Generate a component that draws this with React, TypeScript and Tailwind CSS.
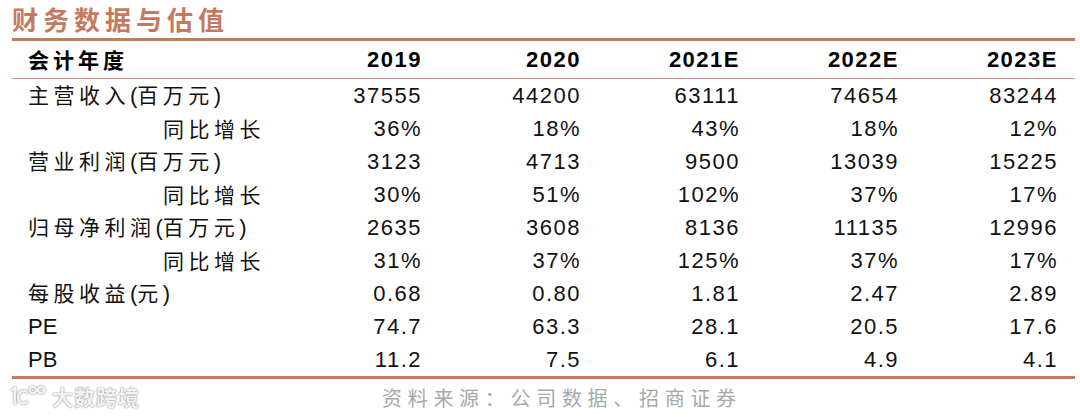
const cjk = "font-['Noto_Sans_CJK_SC',sans-serif]";
const num = "font-['Liberation_Sans',Arial,sans-serif]";

type Row = { label: string; indent?: boolean; latin?: boolean; values: string[] };

const rows: Row[] = [
  { label: "主营收入(百万元)", values: ["37555", "44200", "63111", "74654", "83244"] },
  { label: "同比增长", indent: true, values: ["36%", "18%", "43%", "18%", "12%"] },
  { label: "营业利润(百万元)", values: ["3123", "4713", "9500", "13039", "15225"] },
  { label: "同比增长", indent: true, values: ["30%", "51%", "102%", "37%", "17%"] },
  { label: "归母净利润(百万元)", values: ["2635", "3608", "8136", "11135", "12996"] },
  { label: "同比增长", indent: true, values: ["31%", "37%", "125%", "37%", "17%"] },
  { label: "每股收益(元)", values: ["0.68", "0.80", "1.81", "2.47", "2.89"] },
  { label: "PE", latin: true, values: ["74.7", "63.3", "28.1", "20.5", "17.6"] },
  { label: "PB", latin: true, values: ["11.2", "7.5", "6.1", "4.9", "4.1"] },
];

const years = ["2019", "2020", "2021E", "2022E", "2023E"];

function Label({ row }: { row: Row }) {
  if (row.latin) {
    return <span className={`${num} text-[22px]`}>{row.label}</span>;
  }
  // parentheses are set in the latin face, CJK glyphs get wide spacing
  const parts = row.label.split(/([()])/);
  return (
    <span className={`${cjk} whitespace-nowrap text-[21px] tracking-[4.5px]`}>
      {parts.map((p, i) =>
        p === "(" || p === ")" ? (
          <span key={i} className={`${num} text-[22px] tracking-normal`}>
            {p}
          </span>
        ) : (
          <span key={i}>{p}</span>
        )
      )}
    </span>
  );
}

function Watermark() {
  return (
    <div className="absolute left-[9px] top-[384px] flex items-center gap-[3px] text-[#f2f2f2] [text-shadow:0_0_1px_#8a8a8a,0_0_2px_#b0b0b0]">
      <svg width="40" height="24" viewBox="0 0 40 24" fill="none" stroke="#f2f2f2" strokeWidth="2.2" strokeLinecap="round" className="drop-shadow-[0_0_1px_#888]">
        <path d="M3 6 L6 4 L6 20" />
        <path d="M18 8 C14 5 9 8 9 13 C9 18 14 21 18 18" />
        <circle cx="24" cy="6" r="3.2" />
        <circle cx="32" cy="6" r="3.2" />
      </svg>
      <span className={`${cjk} text-[21px] font-bold leading-none tracking-[1px]`}>大数跨境</span>
    </div>
  );
}

export default function App() {
  return (
    <div className="relative h-[417px] w-[1080px] overflow-hidden bg-white">
      <div className="pl-[12px] pr-[5px]">
        <div className="flex h-[38px] items-center">
          <span className={`${cjk} text-[26px] font-bold leading-none tracking-[5px] text-[#c47a5e]`}>
            财务数据与估值
          </span>
        </div>
        <div className="border-t-[3px] border-[#c47a5e]">
          <div className="grid h-[38px] grid-cols-[250px_repeat(5,159px)] items-center border-b border-[#c98c72] text-black">
            <span className={`${cjk} pl-[16px] text-[21px] font-bold tracking-[4px]`}>会计年度</span>
            {years.map((y) => (
              <span key={y} className={`${num} text-right text-[22px] font-bold tracking-[1.5px] mr-[-1px]`}>
                {y}
              </span>
            ))}
          </div>
          <div className="border-b-[3px] border-[#c47a5e]">
            {rows.map((row, i) => (
              <div
                key={i}
                className="grid h-[33px] grid-cols-[250px_repeat(5,159px)] items-center pb-[5px] text-[#111]"
              >
                <div className={row.indent ? "pl-[151px]" : "pl-[16px]"}>
                  <Label row={row} />
                </div>
                {row.values.map((v, j) => (
                  <span key={j} className={`${num} text-right text-[22px] tracking-[1.5px] mr-[-1px]`}>
                    {v}
                  </span>
                ))}
              </div>
            ))}
          </div>
        </div>
      </div>
      <div className="flex h-[38px] items-center pl-[382px]">
        <span className={`${cjk} text-[20px] tracking-[5.7px] text-[#a8a8a8]`}>
          资料来源：公司数据、招商证券
        </span>
      </div>
      <Watermark />
    </div>
  );
}
